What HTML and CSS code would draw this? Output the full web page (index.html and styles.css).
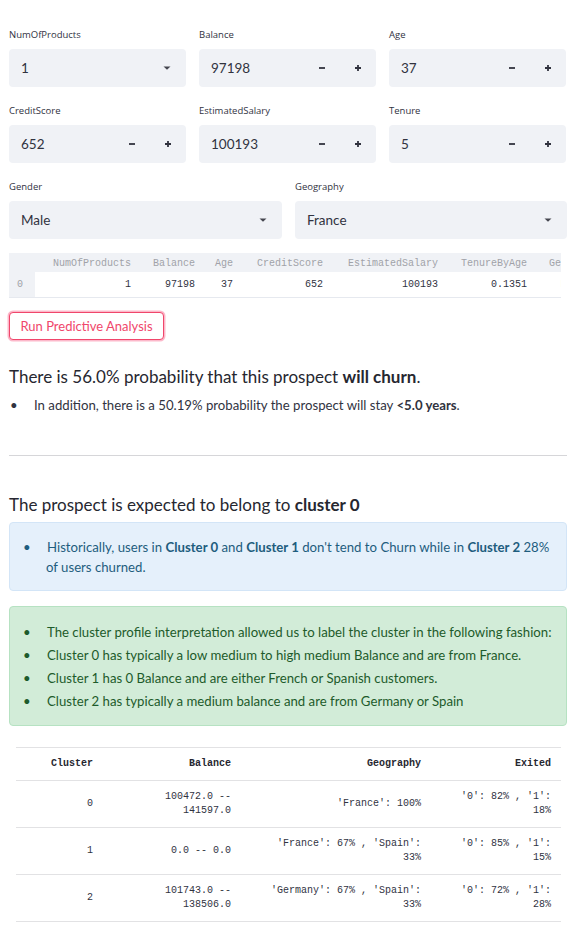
FILE: index.html
```html
<!DOCTYPE html>
<html>
<head>
<meta charset="utf-8">
<link rel="stylesheet" href="styles.css">
</head>
<body>
<div class="page">
  <div class="grid3">
    <div class="field">
      <div class="label">NumOfProducts</div>
      <div class="input"><span class="val">1</span><span class="caret"><svg width="8" height="4" viewBox="0 0 8 4"><path d="M0.5 0.5h7L4 3.8z" fill="#45464f"/></svg></span></div>
    </div>
    <div class="field">
      <div class="label">Balance</div>
      <div class="input"><span class="val">97198</span><span class="step"><svg width="8" height="8" viewBox="0 0 8 8"><path d="M1 4h6" stroke="#31333f" stroke-width="1.8"/></svg></span><span class="step"><svg width="8" height="8" viewBox="0 0 8 8"><path d="M1 4h6M4 1v6" stroke="#31333f" stroke-width="1.8"/></svg></span></div>
    </div>
    <div class="field">
      <div class="label">Age</div>
      <div class="input"><span class="val">37</span><span class="step"><svg width="8" height="8" viewBox="0 0 8 8"><path d="M1 4h6" stroke="#31333f" stroke-width="1.8"/></svg></span><span class="step"><svg width="8" height="8" viewBox="0 0 8 8"><path d="M1 4h6M4 1v6" stroke="#31333f" stroke-width="1.8"/></svg></span></div>
    </div>
    <div class="field">
      <div class="label">CreditScore</div>
      <div class="input"><span class="val">652</span><span class="step"><svg width="8" height="8" viewBox="0 0 8 8"><path d="M1 4h6" stroke="#31333f" stroke-width="1.8"/></svg></span><span class="step"><svg width="8" height="8" viewBox="0 0 8 8"><path d="M1 4h6M4 1v6" stroke="#31333f" stroke-width="1.8"/></svg></span></div>
    </div>
    <div class="field">
      <div class="label">EstimatedSalary</div>
      <div class="input"><span class="val">100193</span><span class="step"><svg width="8" height="8" viewBox="0 0 8 8"><path d="M1 4h6" stroke="#31333f" stroke-width="1.8"/></svg></span><span class="step"><svg width="8" height="8" viewBox="0 0 8 8"><path d="M1 4h6M4 1v6" stroke="#31333f" stroke-width="1.8"/></svg></span></div>
    </div>
    <div class="field">
      <div class="label">Tenure</div>
      <div class="input"><span class="val">5</span><span class="step"><svg width="8" height="8" viewBox="0 0 8 8"><path d="M1 4h6" stroke="#31333f" stroke-width="1.8"/></svg></span><span class="step"><svg width="8" height="8" viewBox="0 0 8 8"><path d="M1 4h6M4 1v6" stroke="#31333f" stroke-width="1.8"/></svg></span></div>
    </div>
  </div>
  <div class="grid2">
    <div class="field">
      <div class="label">Gender</div>
      <div class="input"><span class="val">Male</span><span class="caret"><svg width="8" height="4" viewBox="0 0 8 4"><path d="M0.5 0.5h7L4 3.8z" fill="#45464f"/></svg></span></div>
    </div>
    <div class="field">
      <div class="label">Geography</div>
      <div class="input"><span class="val">France</span><span class="caret"><svg width="8" height="4" viewBox="0 0 8 4"><path d="M0.5 0.5h7L4 3.8z" fill="#45464f"/></svg></span></div>
    </div>
  </div>

  <div class="df">
    <table class="dft">
      <thead>
        <tr><th class="idx"></th><th>NumOfProducts</th><th>Balance</th><th>Age</th><th>CreditScore</th><th>EstimatedSalary</th><th>TenureByAge</th><th class="last">Gender</th></tr>
      </thead>
      <tbody>
        <tr><td class="idx">0</td><td>1</td><td>97198</td><td>37</td><td>652</td><td>100193</td><td>0.1351</td><td class="last">Male</td></tr>
      </tbody>
    </table>
  </div>

  <button class="btn">Run Predictive Analysis</button>

  <h3 class="h">There is 56.0% probability that this prospect <b>will churn</b>.</h3>
  <ul class="list top">
    <li>In addition, there is a 50.19% probability the prospect will stay <b>&lt;5.0 years</b>.</li>
  </ul>

  <hr class="divider">

  <h3 class="h h2">The prospect is expected to belong to <b>cluster 0</b></h3>

  <div class="alert info">
    <ul class="list">
      <li>Historically, users in <b>Cluster 0</b> and <b>Cluster 1</b> don't tend to Churn while in <b>Cluster 2</b> 28% of users churned.</li>
    </ul>
  </div>

  <div class="alert success">
    <ul class="list">
      <li>The cluster profile interpretation allowed us to label the cluster in the following fashion:</li>
      <li>Cluster 0 has typically a low medium to high medium Balance and are from France.</li>
      <li>Cluster 1 has 0 Balance and are either French or Spanish customers.</li>
      <li>Cluster 2 has typically a medium balance and are from Germany or Spain</li>
    </ul>
  </div>

  <table class="ct">
    <thead>
      <tr><th class="c1">Cluster</th><th class="c2">Balance</th><th class="c3">Geography</th><th class="c4">Exited</th></tr>
    </thead>
    <tbody>
      <tr><td class="c1">0</td><td class="c2">100472.0 -- 141597.0</td><td class="c3">'France': 100%</td><td class="c4">'0': 82% , '1': 18%</td></tr>
      <tr><td class="c1">1</td><td class="c2">0.0 -- 0.0</td><td class="c3">'France': 67% , 'Spain': 33%</td><td class="c4">'0': 85% , '1': 15%</td></tr>
      <tr><td class="c1">2</td><td class="c2">101743.0 -- 138506.0</td><td class="c3">'Germany': 67% , 'Spain': 33%</td><td class="c4">'0': 72% , '1': 28%</td></tr>
    </tbody>
  </table>
</div>
</body>
</html>
```

FILE: styles.css
```css
* { box-sizing: border-box; }
html, body { margin: 0; padding: 0; background: #ffffff; }
body {
  font-family: Lato, "Liberation Sans", sans-serif;
  color: #31333f;
}
.page {
  width: 588px;
  padding: 28px 21px 0 9px;
}
.grid3 {
  display: grid;
  grid-template-columns: 177px 177px 177px;
  column-gap: 13px;
  row-gap: 17px;
}
.grid2 {
  display: grid;
  grid-template-columns: 273px 272px;
  column-gap: 13px;
  margin-top: 17px;
}
.label {
  font-family: "Open Sans", sans-serif;
  font-size: 9.5px;
  line-height: 13px;
  height: 14px;
  margin-bottom: 7px;
  color: #31333f;
}
.input {
  height: 38px;
  background: #f0f2f6;
  border-radius: 4px;
  display: flex;
  align-items: center;
}
.val {
  flex: 1;
  padding-left: 12px;
  font-size: 13.5px;
  line-height: 16px;
  padding-bottom: 1px;
  color: #31333f;
}
.caret {
  width: 36px;
  display: flex;
  justify-content: center;
  align-items: center;
  padding-right: 2px;
}
.caret svg { display: block; }
.step {
  width: 36px;
  height: 38px;
  display: flex;
  align-items: center;
  justify-content: center;
}
.step svg { display: block; }

.df {
  margin-top: 14px;
  width: 552px;
  overflow: hidden;
  border-bottom: 1px solid #e6e9ef;
}
.dft {
  border-collapse: collapse;
  table-layout: fixed;
  width: 587px;
  font-family: "Liberation Mono", monospace;
  font-size: 10px;
}
.dft th, .dft td {
  text-align: right;
  padding: 0 11px 0 0;
  white-space: nowrap;
  overflow: hidden;
}
.dft th {
  height: 19px;
  background: #f0f2f6;
  color: #a0a2a8;
  font-weight: normal;
  padding-top: 1px;
}
.dft td {
  height: 25px;
  color: #31333f;
  background: #ffffff;
}
.dft .idx { background: #f0f2f6; color: #a0a2a8; text-align: center; padding: 0 4px 0 0; width: 26px; }
.dft th:nth-child(2) { width: 107px; }
.dft th:nth-child(3) { width: 64px; }
.dft th:nth-child(4) { width: 38px; }
.dft th:nth-child(5) { width: 90px; }
.dft th:nth-child(6) { width: 115px; }
.dft th:nth-child(7) { width: 89px; }
.dft th.last { width: 58px; }

.btn {
  display: block;
  margin-top: 14px;
  height: 28px;
  width: 155px;
  padding: 0;
  background: #ffffff;
  border: 1px solid #f0466b;
  border-radius: 4px;
  box-shadow: 0 0 0 1.5px rgba(246, 51, 102, 0.35);
  color: #f0466b;
  font-family: Lato, sans-serif;
  font-size: 13px;
}

.h {
  margin: 26px 0 0 0;
  font-size: 17px;
  font-weight: normal;
  line-height: 22px;
  color: #262730;
}
.h b { font-weight: bold; }
.list {
  list-style: none;
  margin: 0;
  padding: 0;
  font-size: 13.2px;
  line-height: 23px;
}
.list li {
  padding-left: 24px;
}
.list li::before {
  content: "\2022";
  display: inline-block;
  width: 24px;
  margin-left: -24px;
  padding-left: 1px;
}
.h + .list { margin-top: 6px; }
.list b { font-weight: bold; }

.divider {
  margin: 38px 0 0 0;
  border: none;
  border-top: 1px solid #d6d6d9;
  height: 0;
}
.h2 { margin-top: 38px; }

.alert {
  border-radius: 4px;
  padding: 14px 6px 13px 12px;
  margin-top: 6px;
}
.alert .list li { padding-left: 24px; }
.info {
  background: #e5f0fb;
  border: 1px solid #d3e5f7;
  color: #1e5d7e;
}
.info .list { line-height: 20px; }
.success {
  background: #d2ecd8;
  border: 1px solid #b6e2c2;
  color: #1d5b2b;
  margin-top: 15px;
  padding-top: 14px;
  padding-bottom: 12px;
}

.ct {
  margin: 21px 0 0 7px;
  border-collapse: collapse;
  table-layout: fixed;
  width: 545px;
  font-family: "Liberation Mono", monospace;
  font-size: 10px;
  line-height: 14px;
  color: #31333f;
}
.ct th, .ct td {
  text-align: right;
  vertical-align: middle;
  border-top: 1px solid #e2e2e4;
  border-bottom: 1px solid #e2e2e4;
  padding: 9px 9px 9px 0;
}
.ct th { font-weight: bold; padding-top: 9px; padding-bottom: 9px; color: #262730; }
.ct td { padding-top: 9px; padding-bottom: 9px; }
.ct .c1 { width: 86px; }
.ct .c2 { width: 138px; padding-left: 26px; }
.ct .c3 { width: 190px; padding-left: 30px; }
.ct .c4 { width: 131px; padding-left: 22px; padding-right: 10px; }
```
